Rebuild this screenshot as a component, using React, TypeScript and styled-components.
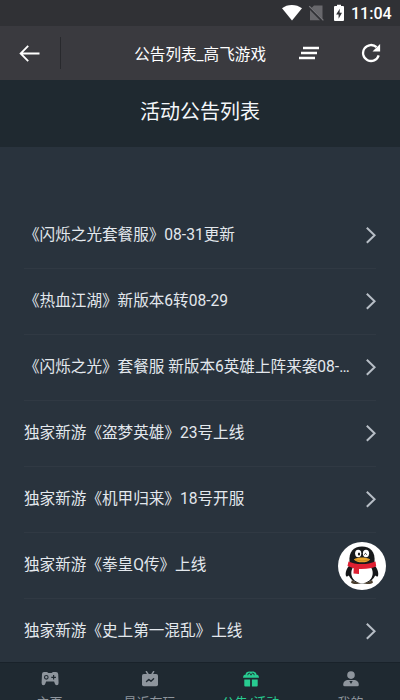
import React from 'react';
import styled, { createGlobalStyle } from 'styled-components';

const GlobalStyle = createGlobalStyle`
  * { box-sizing: border-box; }
  body { margin: 0; background: #29333d; overflow: hidden; }
`;

const Screen = styled.div`
  position: relative;
  display: flex;
  flex-direction: column;
  width: 400px;
  height: 700px;
  overflow: hidden;
  background: #29333d;
  color: #e3e8ed;
  font-family: Roboto, 'Noto Sans CJK SC', sans-serif;
`;

const StatusBar = styled.div`
  flex: none;
  display: flex;
  align-items: center;
  justify-content: flex-end;
  height: 26px;
  padding-right: 8px;
  background: #303135;
  color: #fff;
`;

const Clock = styled.span`
  width: 40px;
  margin-left: 7px;
  margin-right: 1px;
  padding-top: 2px;
  font-size: 16px;
  font-weight: 500;
  line-height: 24px;
  white-space: nowrap;
`;

const Toolbar = styled.header`
  flex: none;
  display: grid;
  grid-template-columns: 60px 1px 1fr 60px 64px;
  align-items: center;
  justify-items: center;
  height: 54px;
  background: #3a3a3f;
  color: #fff;
`;

const Divider = styled.div`
  width: 1px;
  height: 32px;
  background: #28292d;
`;

const PageName = styled.div`
  justify-self: end;
  margin-right: 10px;
  padding-top: 3px;
  font-size: 15.6px;
  line-height: 24px;
  white-space: nowrap;
`;

const ToolButton = styled.button`
  display: flex;
  padding: 0;
  border: 0;
  background: none;
  color: inherit;
`;

const MenuButton = styled(ToolButton)`
  margin-left: 6px;
`;

const RefreshButton = styled(ToolButton)`
  margin-left: 5px;
`;

const Heading = styled.h1`
  flex: none;
  height: 67px;
  margin: 0;
  background: #1f2930;
  color: #f4f7fa;
  font-size: 20px;
  font-weight: 400;
  line-height: 64px;
  text-align: center;
`;

const NoticeList = styled.ul`
  flex: none;
  height: 515px;
  margin: 0;
  padding: 56px 24px 0;
  overflow: hidden;
  list-style: none;
`;

const Notice = styled.li`
  display: flex;
  align-items: center;
  justify-content: space-between;
  height: 66px;
  padding-bottom: 2px;
  border-bottom: 1px solid #303943;
`;

const NoticeTitle = styled.span`
  width: 328px;
  overflow: hidden;
  font-size: 15.6px;
  line-height: 24px;
  white-space: nowrap;
  text-overflow: ellipsis;
`;

const BottomNav = styled.nav`
  flex: none;
  display: grid;
  grid-template-columns: 99px 101px 101px 99px;
  height: 60px;
  border-top: 1px solid #19222a;
  background: #1f2931;
`;

const NavItem = styled.div<{ $active?: boolean }>`
  display: flex;
  flex-direction: column;
  align-items: center;
  padding-top: 8px;
  color: ${(p) => (p.$active ? '#28cc91' : '#8e959d')};
  font-size: 13px;
  line-height: 20px;
`;

const NavLabel = styled.span`
  margin-top: 6px;
`;

const ChatBubble = styled.button`
  position: absolute;
  top: 542px;
  left: 338px;
  width: 48px;
  height: 48px;
  padding: 0;
  border: 0;
  border-radius: 50%;
  background: #fff;
`;

const Chevron = () => (
  <svg width="12" height="18" viewBox="0 0 12 18" fill="none" stroke="#b7bec6" strokeWidth="2">
    <path d="M2.8 1.8 10.6 9.3 2.8 16.8" />
  </svg>
);

const StatusIcons = () => (
  <svg width="64" height="18" viewBox="0 0 64 18">
    <path d="M2 4.3C7-.2 16.5-.2 22 4.3L12 16.4Z" fill="#fff" />
    <path d="M31.5 4 34 1.4h8.5V15L31.5 3.7ZM30 6l10 10.3H30Z" fill="#68686c" />
    <path d="m29.2 2.2 14.2 14.2" stroke="#77777b" strokeWidth="1.2" />
    <path d="M55 2h2V.7h4V2h2q1 0 1 1v13q0 1-1 1h-8q-1 0-1-1V3q0-1 1-1Z" fill="#fff" />
    <path d="m59.8 4.7-3.7 5.7h2.5v4.3L62 8.8h-2.4Z" fill="#303135" />
  </svg>
);

const Penguin = () => (
  <svg width="48" height="48" viewBox="0 0 48 48">
    <path d="M12 23C8.5 26 7 31 8 34c1 1.5 3-.5 4-2M36 23c3.5 3 5 8 4 11-1 1.5-3-.5-4-2" fill="#151719" />
    <ellipse cx="24" cy="29" rx="14" ry="12.6" fill="#151719" />
    <ellipse cx="24" cy="31" rx="10.7" ry="10.4" fill="#fff" />
    <path d="M14 38c2 2 5 2.5 8 3-2 1.5-7 1.5-9-.5ZM34 38c-2 2-5 2.5-8 3 2 1.5 7 1.5 9-.5Z" fill="#4a3d2c" />
    <path d="M11.5 20C10.5 10 15.5 4.5 24 4.5S37.5 10 36.5 20c-2 5-23 5-25 0Z" fill="#17191b" />
    <path d="M10.5 19.5c7 3.4 19 3.4 27 0l.7 4.8c-4 2-9 2.8-17.2 2.6v5.1l-5.5-.6.2-5.2-6.2-2.2Z" fill="#de1f32" />
    <ellipse cx="20.2" cy="11.5" rx="3.1" ry="3.7" fill="#fff" />
    <ellipse cx="28" cy="11.5" rx="3.1" ry="3.7" fill="#fff" />
    <ellipse cx="21" cy="12" rx="1.1" ry="1.6" fill="#111" />
    <path d="M26.3 12.5q1.2-2.2 2.4 0" fill="none" stroke="#111" strokeWidth="1" />
    <path d="M15.8 17.4c4-2.4 12-2.4 16.4 0-3 3.8-13 3.8-16.4 0Z" fill="#e8a52b" />
    <path d="M17 18q7 1.7 14 0" fill="none" stroke="#b37524" strokeWidth=".5" />
  </svg>
);

const GamepadIcon = () => (
  <svg width="18" height="16" viewBox="0 0 18 16">
    <path d="M3 1h3l1.4 1h3.2L12 1h3q2 0 2.2 2l.4 9q0 2.2-1.8 2.2-1.7 0-2-1.7l-.7-2H5.1l-.7 2q-.3 1.7-2 1.7Q.6 14.2.6 12L1 3q.2-2 2-2Z" fill="currentColor" />
    <circle cx="5.3" cy="6.3" r="1.8" fill="none" stroke="#1f2931" strokeWidth="1.1" />
    <path d="M12.6 4v4.6M10.3 6.3h4.6" stroke="#1f2931" strokeWidth="1.2" />
  </svg>
);

const RecentIcon = () => (
  <svg width="18" height="16" viewBox="0 0 18 16">
    <path d="M5.4.7 7.5 4M12.6.7 10.5 4" stroke="currentColor" strokeWidth="1.5" strokeLinecap="round" />
    <rect x="1" y="3" width="16" height="12.2" rx="1.8" fill="currentColor" />
    <path d="m5.5 10.5 2.5-2.1 2 1.8 2.6-2.4" fill="none" stroke="#1f2931" strokeWidth="1.4" strokeLinecap="round" strokeLinejoin="round" />
  </svg>
);

const GiftIcon = () => (
  <svg width="18" height="16" viewBox="0 0 18 16">
    <path d="M3.5 3.8C3.5 1.5 5.7.2 9 .7c3.3-.5 5.5.8 5.5 3.1h.9q1.6.3 1.6 2.9H1q0-2.6 1.6-2.9ZM2.3 8.5h5.8v6.9H3.3q-1 0-1-1ZM9.9 8.5h5.8v5.9q0 1-1 1H9.9Z" fill="currentColor" />
    <path d="M5.8 4.2q-.1-2 1.5-2 1.3.2 1.7 2 .4-1.8 1.7-2 1.6 0 1.5 2" fill="none" stroke="#1f2931" strokeWidth=".9" />
  </svg>
);

const ProfileIcon = () => (
  <svg width="18" height="16" viewBox="0 0 18 16">
    <circle cx="9" cy="4.1" r="3.8" fill="currentColor" />
    <path d="M5 9.1h8q3.8 1.1 3.8 4.7 0 1.5-1.5 1.5H2.7q-1.5 0-1.5-1.5 0-3.6 3.8-4.7Z" fill="currentColor" />
    <path d="M7.3 9.9h3.4L9 13Z" fill="#1f2931" />
  </svg>
);

const notices = [
  '《闪烁之光套餐服》08-31更新',
  '《热血江湖》新版本6转08-29',
  '《闪烁之光》套餐服 新版本6英雄上阵来袭08-31',
  '独家新游《盗梦英雄》23号上线',
  '独家新游《机甲归来》18号开服',
  '独家新游《拳皇Q传》上线',
  '独家新游《史上第一混乱》上线',
];

const tabs = [
  { label: '主页', Icon: GamepadIcon },
  { label: '最近在玩', Icon: RecentIcon },
  { label: '公告/活动', Icon: GiftIcon, active: true },
  { label: '我的', Icon: ProfileIcon },
];

export default function App() {
  return (
    <Screen>
      <GlobalStyle />
      <StatusBar>
        <StatusIcons />
        <Clock>11:04</Clock>
      </StatusBar>
      <Toolbar>
        <ToolButton aria-label="返回">
          <svg width="22" height="18" viewBox="0 0 22 18" fill="none" stroke="currentColor" strokeWidth="1.8">
            <path d="M20.5 9.5H1.8M9.2 1.8 1.6 9.5l7.6 7.7" />
          </svg>
        </ToolButton>
        <Divider />
        <PageName>公告列表_高飞游戏</PageName>
        <MenuButton aria-label="菜单">
          <svg width="22" height="14" viewBox="0 0 22 14" fill="none" stroke="currentColor" strokeWidth="2.3">
            <path d="M5 2h16M3 7h16M1 12h16" />
          </svg>
        </MenuButton>
        <RefreshButton aria-label="刷新">
          <svg width="20" height="20" viewBox="0 0 20 20">
            <path d="M17.7 12.4A8 8 0 1 1 15.6 4.2" fill="none" stroke="currentColor" strokeWidth="2.3" />
            <path d="M19.1 1v7.6h-7.6Z" fill="currentColor" />
          </svg>
        </RefreshButton>
      </Toolbar>
      <Heading>活动公告列表</Heading>
      <NoticeList>
        {notices.map((title) => (
          <Notice key={title}>
            <NoticeTitle>{title}</NoticeTitle>
            <Chevron />
          </Notice>
        ))}
      </NoticeList>
      <BottomNav>
        {tabs.map(({ label, Icon, active }) => (
          <NavItem key={label} $active={active}>
            <Icon />
            <NavLabel>{label}</NavLabel>
          </NavItem>
        ))}
      </BottomNav>
      <ChatBubble aria-label="QQ">
        <Penguin />
      </ChatBubble>
    </Screen>
  );
}
